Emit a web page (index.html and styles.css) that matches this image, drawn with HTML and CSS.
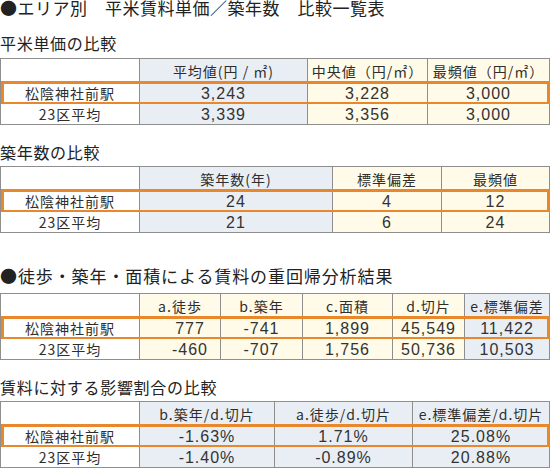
FILE: index.html
```html
<!DOCTYPE html>
<html lang="ja">
<head>
<meta charset="utf-8">
<title>比較一覧表</title>
<link rel="stylesheet" href="styles.css">
</head>
<body>
<div class="page">
  <h1 class="title">●エリア別　平米賃料単価／築年数　比較一覧表</h1>

  <h2 class="head first">平米単価の比較</h2>
  <div class="tbl t1">
    <div class="row hdr"><div class="c w"></div><div class="c b">平均値(円 / ㎡)</div><div class="c y">中央値（円/㎡）</div><div class="c y">最頻値（円/㎡）</div></div>
    <div class="row hl"><div class="c w name">松陰神社前駅</div><div class="c b num">3,243</div><div class="c y num">3,228</div><div class="c y num">3,000</div></div>
    <div class="row"><div class="c w name">23区平均</div><div class="c b num">3,339</div><div class="c y num">3,356</div><div class="c y num">3,000</div></div>
  </div>

  <h2 class="head gap-s">築年数の比較</h2>
  <div class="tbl t2">
    <div class="row hdr"><div class="c w"></div><div class="c b">築年数(年)</div><div class="c y">標準偏差</div><div class="c y">最頻値</div></div>
    <div class="row hl"><div class="c w name">松陰神社前駅</div><div class="c b num">24</div><div class="c y num">4</div><div class="c y num">12</div></div>
    <div class="row"><div class="c w name">23区平均</div><div class="c b num">21</div><div class="c y num">6</div><div class="c y num">24</div></div>
  </div>

  <h2 class="head big gap-l">●徒歩・築年・面積による賃料の重回帰分析結果</h2>
  <div class="tbl t3">
    <div class="row hdr"><div class="c w"></div><div class="c y">a.徒歩</div><div class="c y">b.築年</div><div class="c y">c.面積</div><div class="c y">d.切片</div><div class="c b">e.標準偏差</div></div>
    <div class="row hl"><div class="c w name">松陰神社前駅</div><div class="c y num shift">777</div><div class="c y num">-741</div><div class="c y num">1,899</div><div class="c y num">45,549</div><div class="c b num">11,422</div></div>
    <div class="row"><div class="c w name">23区平均</div><div class="c y num shift">-460</div><div class="c y num">-707</div><div class="c y num">1,756</div><div class="c y num">50,736</div><div class="c b num">10,503</div></div>
  </div>

  <h2 class="head gap-m">賃料に対する影響割合の比較</h2>
  <div class="tbl t4">
    <div class="row hdr"><div class="c w"></div><div class="c b">b.築年/d.切片</div><div class="c b">a.徒歩/d.切片</div><div class="c b">e.標準偏差/d.切片</div></div>
    <div class="row hl"><div class="c w name">松陰神社前駅</div><div class="c b num">-1.63%</div><div class="c b num">1.71%</div><div class="c b num">25.08%</div></div>
    <div class="row"><div class="c w name">23区平均</div><div class="c b num">-1.40%</div><div class="c b num">-0.89%</div><div class="c b num">20.88%</div></div>
  </div>
</div>
</body>
</html>
```
FILE: styles.css
```css
* { box-sizing: border-box; }
body {
  margin: 0;
  background: #ffffff;
  font-family: "Noto Sans CJK JP", "Noto Sans", sans-serif;
  color: #222222;
}
.page { width: 550px; }
.title {
  margin: 0 0 16px;
  font-size: 17px;
  font-weight: normal;
  line-height: 16px;
  letter-spacing: 0.5px;
  white-space: nowrap;
}
.head {
  margin: 0 0 4px;
  font-size: 16px;
  font-weight: normal;
  line-height: 22px;
  letter-spacing: 0.7px;
  white-space: nowrap;
}
.head.big { font-size: 17px; letter-spacing: 0.9px; }
.head.gap-s { margin-top: 16px; margin-bottom: 3px; }
.head.gap-l { margin-top: 32px; margin-bottom: 6px; }
.head.gap-m { margin-top: 16px; margin-bottom: 3px; }

.tbl {
  width: 550px;
  border-top: 1px solid #8e8e8e;
  border-left: 1px solid #8e8e8e;
}
.t1 { --cols: 139px 168px 120px 122px; }
.t2 { --cols: 139px 193px 109px 108px; }
.t3 { --cols: 139px 81px 82px 90px 72px 85px; }
.t4 { --cols: 139px 135px 138px 137px; }

.row {
  display: grid;
  grid-template-columns: var(--cols);
  height: 21px;
  position: relative;
}
.row.hdr { height: 24px; }
.row.hl::after {
  content: "";
  position: absolute;
  top: -2px;
  bottom: -1px;
  left: 0;
  right: 0;
  border: 3px solid #e8872c;
  pointer-events: none;
}
.c {
  display: flex;
  align-items: center;
  justify-content: center;
  border-right: 1px solid #8e8e8e;
  border-bottom: 1px solid #8e8e8e;
  font-size: 14px;
  line-height: 16px;
  letter-spacing: 1px;
  white-space: nowrap;
  color: #2e2e2e;
}
.c.w { background: #ffffff; }
.c.b { background: #e9eef5; }
.c.y { background: #fffbe8; }
.c.num {
  font-family: "Liberation Sans", "Noto Sans CJK JP", sans-serif;
  font-size: 16px;
  line-height: 17px;
  letter-spacing: 1px;
  color: #333333;
}
.c.shift { padding-left: 20px; }
```
